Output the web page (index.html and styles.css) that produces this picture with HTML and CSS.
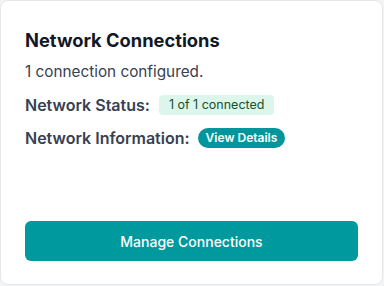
FILE: index.html
```html
<!DOCTYPE html>
<html lang="en">
<head>
    <meta charset="UTF-8">
    <meta name="viewport" content="width=device-width, initial-scale=1.0">
    <title>Network Connections</title>
    <link rel="stylesheet" href="styles.css">
</head>
<body>

    <div class="card">
        <h2 class="title">Network Connections</h2>
        <p class="summary">1 connection configured.</p>
        <div class="row">
            <span class="label">Network Status:</span>
            <span class="badge badge-ok">1 of 1 connected</span>
        </div>
        <div class="row">
            <span class="label">Network Information:</span>
            <span class="badge badge-link">View Details</span>
        </div>
        <button class="manage">Manage Connections</button>
    </div>

</body>
</html>
```

FILE: styles.css
```css
body {
    margin: 0;
    padding: 0;
    background-color: #f3f4f6;
    font-family: 'Inter', 'Liberation Sans', sans-serif;
}
.card {
    box-sizing: border-box;
    width: 383px;
    height: 285px;
    background-color: #ffffff;
    border: 1px solid #e5e7eb;
    border-radius: 8px;
    padding: 27px 24px 23px 24px;
    display: flex;
    flex-direction: column;
}
.title {
    margin: 0;
    font-size: 18.3px;
    font-weight: 700;
    color: #111827;
    line-height: 24px;
}
.summary {
    margin: 8px 0 0 0;
    font-size: 15.3px;
    color: #374151;
    line-height: 24px;
}
.row {
    display: flex;
    align-items: center;
    gap: 8px;
    margin-top: 9px;
    height: 24px;
}
.label {
    font-size: 16px;
    font-weight: 600;
    color: #374151;
}
.badge {
    font-size: 12.5px;
    line-height: 20px;
    padding: 0 9px;
}
.badge-ok {
    background-color: #ddf6ec;
    color: #14532d;
    border-radius: 4px;
    margin-left: 1px;
    padding: 0 10px;
}
.badge-link {
    background-color: #00969c;
    color: #ffffff;
    font-size: 12px;
    font-weight: 600;
    padding: 0 8px;
    border-radius: 10px;
}
.manage {
    margin-top: auto;
    height: 40px;
    width: 100%;
    border: none;
    border-radius: 6px;
    background-color: #00999e;
    color: #ffffff;
    font-family: inherit;
    font-size: 14px;
    font-weight: 500;
}
```
